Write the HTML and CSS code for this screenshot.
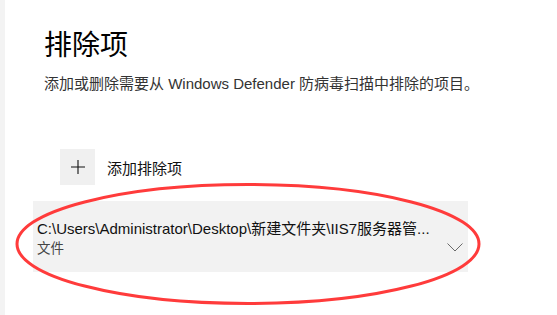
FILE: index.html
```html
<!DOCTYPE html>
<html lang="zh-CN">
<head>
<meta charset="utf-8">
<link rel="stylesheet" href="styles.css">
</head>
<body>
<div class="page">
  <div class="strip"></div>
  <main class="main">
    <h1 class="title">排除项</h1>
    <p class="desc">添加或删除需要从 Windows Defender 防病毒扫描中排除的项目。</p>
    <div class="add">
      <div class="add-btn">
        <svg width="16" height="16" viewBox="0 0 16 16"><path d="M8 1v14M1 8h14" stroke="#111" stroke-width="1.1" fill="none"/></svg>
      </div>
      <span class="add-label">添加排除项</span>
    </div>
    <div class="item">
      <div class="item-text">
        <div class="item-path">C:\Users\Administrator\Desktop\新建文件夹\IIS7服务器管...</div>
        <div class="item-type">文件</div>
      </div>
      <svg class="chev" width="16" height="9" viewBox="0 0 16 9"><path d="M0.5 0.5L8 8L15.5 0.5" stroke="#6a6a6a" stroke-width="1" fill="none"/></svg>
    </div>
  </main>
  <svg class="mark" width="557" height="315" viewBox="0 0 557 315"><ellipse cx="248" cy="244" rx="231" ry="59.5" fill="none" stroke="#ff3b3b" stroke-width="3"/></svg>
</div>
</body>
</html>
```
FILE: styles.css
```css
html, body {
  margin: 0;
  padding: 0;
  background: #fff;
}
body {
  font-family: "Liberation Sans", "Noto Sans CJK SC", sans-serif;
  color: #000;
}
.page {
  position: relative;
  display: flex;
  width: 557px;
  height: 315px;
  overflow: hidden;
}
.strip {
  width: 5px;
  background: #f3f3f3;
  flex: none;
}
.main {
  flex: 1;
  display: flex;
  flex-direction: column;
  align-items: flex-start;
}
.title {
  margin: 23px 0 0 39px;
  font-size: 28px;
  font-weight: 400;
  line-height: 40px;
  font-family: "Noto Sans CJK SC", sans-serif;
}
.desc {
  margin: 11px 0 0 39px;
  font-size: 15px;
  line-height: 20px;
  color: #333;
}
.add {
  margin: 55px 0 0 55px;
  display: flex;
  align-items: center;
  gap: 12px;
}
.add-btn {
  width: 35px;
  height: 36px;
  background: #f0f0f0;
  display: flex;
  align-items: center;
  justify-content: center;
}
.add-label {
  font-size: 15px;
  color: #111;
}
.item {
  margin: 16px 0 0 28px;
  width: 435px;
  height: 71px;
  background: #f2f2f2;
  display: flex;
  align-items: flex-start;
  box-sizing: border-box;
  padding: 18px 0 0 4px;
  position: relative;
}
.item-text {
  flex: 1;
}
.item-path {
  font-size: 15px;
  line-height: 20px;
  color: #111;
}
.item-type {
  font-size: 13.5px;
  line-height: 19px;
  color: #444;
}
.chev {
  position: absolute;
  right: 5px;
  top: 42px;
}
.mark {
  position: absolute;
  left: 0;
  top: 0;
  pointer-events: none;
}
```
